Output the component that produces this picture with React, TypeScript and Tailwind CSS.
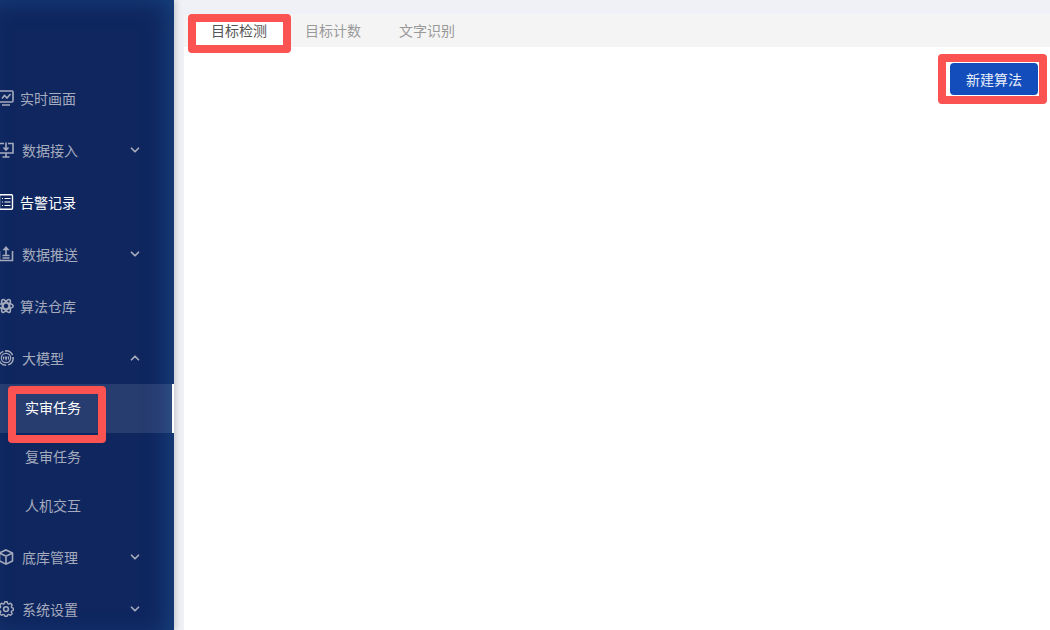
import React, { useState } from 'react';
import { ChevronDown, ChevronUp } from 'lucide-react';

type IconProps = { children: React.ReactNode };

const Icon: React.FC<IconProps> = ({ children }) => (
  <svg
    viewBox="0 0 16 16"
    className="-ml-0.5 h-4 w-4 shrink-0"
    fill="none"
    stroke="currentColor"
    strokeWidth="1.6"
    aria-hidden="true"
  >
    {children}
  </svg>
);

const icons = {
  live: (
    <Icon>
      <rect x="1" y="1" width="14" height="11" rx="1" />
      <path d="M4 8.5l2.5-3 2.5 2.5L12.5 4M4 15h8" />
    </Icon>
  ),
  input: (
    <Icon>
      <path d="M6 1.5H1v9.5h14V1.5h-5M8 .5v7M5.5 5.5L8 8l2.5-2.5M8 11v4M4.5 15h7" />
    </Icon>
  ),
  record: (
    <Icon>
      <rect x="1.5" y="0.7" width="13" height="14.6" rx="1" strokeWidth="1.4" />
      <path d="M4 4.5h1M6.5 4.5h6M4 8h1M6.5 8h6M4 11.5h1M6.5 11.5h6" strokeWidth="1.2" />
    </Icon>
  ),
  push: (
    <Icon>
      <path d="M1.5 5v9.5h13V5M8 9V2M4.5 9.5h7M4.5 12h7" />
      <path d="M8 0l3.5 4.2h-7z" fill="currentColor" stroke="none" />
    </Icon>
  ),
  store: (
    <Icon>
      <ellipse cx="8" cy="8" rx="7.2" ry="3" />
      <ellipse cx="8" cy="8" rx="7.2" ry="3" transform="rotate(60 8 8)" />
      <ellipse cx="8" cy="8" rx="7.2" ry="3" transform="rotate(120 8 8)" />
    </Icon>
  ),
  model: (
    <Icon>
      <circle cx="8" cy="8" r="7.2" strokeDasharray="9 2" strokeWidth="1.4" />
      <circle cx="8" cy="8" r="4.7" strokeWidth="1.2" />
      <path d="M5.5 6.5v3M7 6.5l1 3 1-3M10.5 6.5v3M8 0v2M14 8h2" strokeWidth="1.1" />
    </Icon>
  ),
  library: (
    <Icon>
      <path d="M8 .9l6.5 3v8L8 15.1l-6.5-3.2v-8zM1.5 4L8 7.2 14.5 4M8 7.2v7.9" />
    </Icon>
  ),
  settings: (
    <Icon>
      <path
        strokeWidth="1.4"
        strokeLinejoin="round"
        d="M6.8 .8h2.4l.5 1.9 1.1.5 1.8-1 1.6 1.7-.9 1.7.4 1.1 1.6.5v2.1l-1.6.5-.5 1.1 1 1.8-1.7 1.6-1.8-.9-1 .4-.5 1.5H6.8l-.5-1.5-1.1-.4-1.7.9-1.7-1.6 1-1.8-.5-1.1-1.6-.5V7.2l1.6-.5.4-1.1-.9-1.7 1.7-1.7 1.7 1 1.1-.5z"
      />
      <circle cx="8" cy="8.1" r="2.4" />
    </Icon>
  ),
};

const menu = [
  { name: '实时画面', icon: icons.live },
  { name: '数据接入', icon: icons.input, children: [] },
  { name: '告警记录', icon: icons.record, bright: true },
  { name: '数据推送', icon: icons.push, children: [] },
  { name: '算法仓库', icon: icons.store },
  { name: '大模型', icon: icons.model, children: ['实审任务', '复审任务', '人机交互'] },
  { name: '底库管理', icon: icons.library, children: [] },
  { name: '系统设置', icon: icons.settings, children: [] },
];

const tabs = ['目标检测', '目标计数', '文字识别'];

// Red frame laid over the control it points at
const Marker: React.FC<{ className: string }> = ({ className }) => (
  <span className={`pointer-events-none absolute z-10 rounded border-8 border-[#fb5252] ${className}`} />
);

const Sidebar: React.FC = () => {
  const [open, setOpen] = useState('大模型');
  const [page, setPage] = useState('实审任务');

  return (
    <aside className="z-10 w-[174px] shrink-0 overflow-hidden bg-[#0f265f] pt-[72px] shadow-[inset_-10px_4px_24px_-4px_#17427f,2px_0_6px_rgba(29,35,41,0.2)]">
      <nav>
        {menu.map((item) => (
          <div key={item.name}>
            <button
              type="button"
              onClick={() => item.children && setOpen(open === item.name ? '' : item.name)}
              className={`flex h-13 w-full cursor-pointer items-center pr-8 hover:text-white ${
                item.bright ? 'text-white' : 'text-[#a5abbd]'
              } ${item.children ? 'gap-2' : 'gap-1.5'}`}
            >
              {item.icon}
              <span>{item.name}</span>
              {item.children && (
                <span className="ml-auto">
                  {open === item.name ? (
                    <ChevronUp size={14} strokeWidth={3} />
                  ) : (
                    <ChevronDown size={14} strokeWidth={3} />
                  )}
                </span>
              )}
            </button>

            {open === item.name &&
              item.children?.map((child) => (
                <div key={child} className="relative">
                  <a
                    href="#"
                    onClick={() => setPage(child)}
                    className={`flex h-[49px] items-center pb-1 pl-[25px] ${
                      page === child
                        ? 'border-r-2 border-white bg-white/10 text-white'
                        : 'text-[#a5abbd] hover:text-white'
                    }`}
                  >
                    {child}
                  </a>
                  {child === '实审任务' && <Marker className="top-0.5 left-2 h-[57px] w-[98px]" />}
                </div>
              ))}
          </div>
        ))}
      </nav>
    </aside>
  );
};

const App: React.FC = () => {
  const [tab, setTab] = useState(tabs[0]);

  return (
    <div className="flex h-screen overflow-hidden bg-[#eff1f6] font-['Noto_Sans_CJK_SC',sans-serif] text-sm">
      <Sidebar />
      <main className="mt-3.5 ml-2.5 flex-1 bg-white">
        {/* Tabs */}
        <div role="tablist" className="flex bg-[#f4f4f4] pl-2">
          {tabs.map((name) => (
            <div key={name} className="relative">
              <button
                type="button"
                role="tab"
                aria-selected={tab === name}
                onClick={() => setTab(name)}
                className={`h-[33px] cursor-pointer px-[19px] pb-0.5 ${
                  tab === name ? 'bg-white text-[#555]' : 'text-[#999]'
                }`}
              >
                {name}
              </button>
              {name === tabs[0] && <Marker className="top-0 -left-1 h-[39px] w-[103px]" />}
            </div>
          ))}
        </div>

        {/* Toolbar */}
        <div className="flex justify-end px-3 py-4">
          <div className="relative">
            <button type="button" className="h-8 cursor-pointer rounded bg-[#134dbc] px-4 text-[#e8eefa]">
              新建算法
            </button>
            <Marker className="-top-[9px] -left-3 h-[50px] w-[109px]" />
          </div>
        </div>
      </main>
    </div>
  );
};

export default App;
